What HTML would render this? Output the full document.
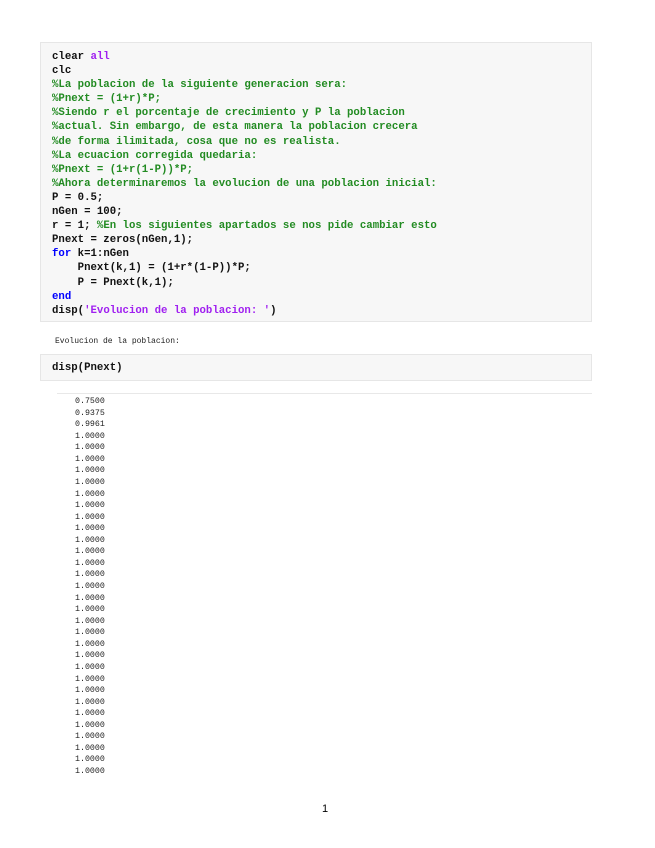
<!DOCTYPE html>
<html><head><meta charset="utf-8"><style>
body{margin:0;width:655px;height:848px;background:#fff;position:relative;font-family:"Liberation Mono",monospace;}
.box{position:absolute;left:40px;width:552px;background:#f7f7f7;border:1px solid #e6e6e6;box-sizing:border-box;}
.code{font-size:10.7px;line-height:14.1px;color:#111;white-space:pre;font-weight:bold;padding-left:11px;}
.c{color:#228b22;}.s{color:#a020f0;}.k{color:#0000ff;}
#out{position:absolute;left:75px;top:396px;font-size:8.3px;line-height:11.56px;white-space:pre;color:#222;}
</style></head><body>
<div class="box code" style="top:42px;height:280px;padding-top:7px;">clear <span class="s">all</span>
clc
<span class="c">%La poblacion de la siguiente generacion sera:</span>
<span class="c">%Pnext = (1+r)*P;</span>
<span class="c">%Siendo r el porcentaje de crecimiento y P la poblacion</span>
<span class="c">%actual. Sin embargo, de esta manera la poblacion crecera</span>
<span class="c">%de forma ilimitada, cosa que no es realista.</span>
<span class="c">%La ecuacion corregida quedaria:</span>
<span class="c">%Pnext = (1+r(1-P))*P;</span>
<span class="c">%Ahora determinaremos la evolucion de una poblacion inicial:</span>
P = 0.5;
nGen = 100;
r = 1; <span class="c">%En los siguientes apartados se nos pide cambiar esto</span>
Pnext = zeros(nGen,1);
<span class="k">for</span> k=1:nGen
    Pnext(k,1) = (1+r*(1-P))*P;
    P = Pnext(k,1);
<span class="k">end</span>
disp(<span class="s">'Evolucion de la poblacion: '</span>)</div>
<div style="position:absolute;left:55px;top:337px;font-size:8px;color:#222;white-space:pre;">Evolucion de la poblacion:</div>
<div class="box code" style="top:354px;height:27px;padding-top:6px;">disp(Pnext)</div>
<div style="position:absolute;left:57px;top:393px;width:535px;height:1px;background:#e8e8e8;"></div>
<div id="out">0.7500
0.9375
0.9961
1.0000
1.0000
1.0000
1.0000
1.0000
1.0000
1.0000
1.0000
1.0000
1.0000
1.0000
1.0000
1.0000
1.0000
1.0000
1.0000
1.0000
1.0000
1.0000
1.0000
1.0000
1.0000
1.0000
1.0000
1.0000
1.0000
1.0000
1.0000
1.0000
1.0000</div>
<div style="position:absolute;left:322px;top:803px;font-family:'Liberation Sans',sans-serif;font-size:11px;color:#000;">1</div>
</body></html>
